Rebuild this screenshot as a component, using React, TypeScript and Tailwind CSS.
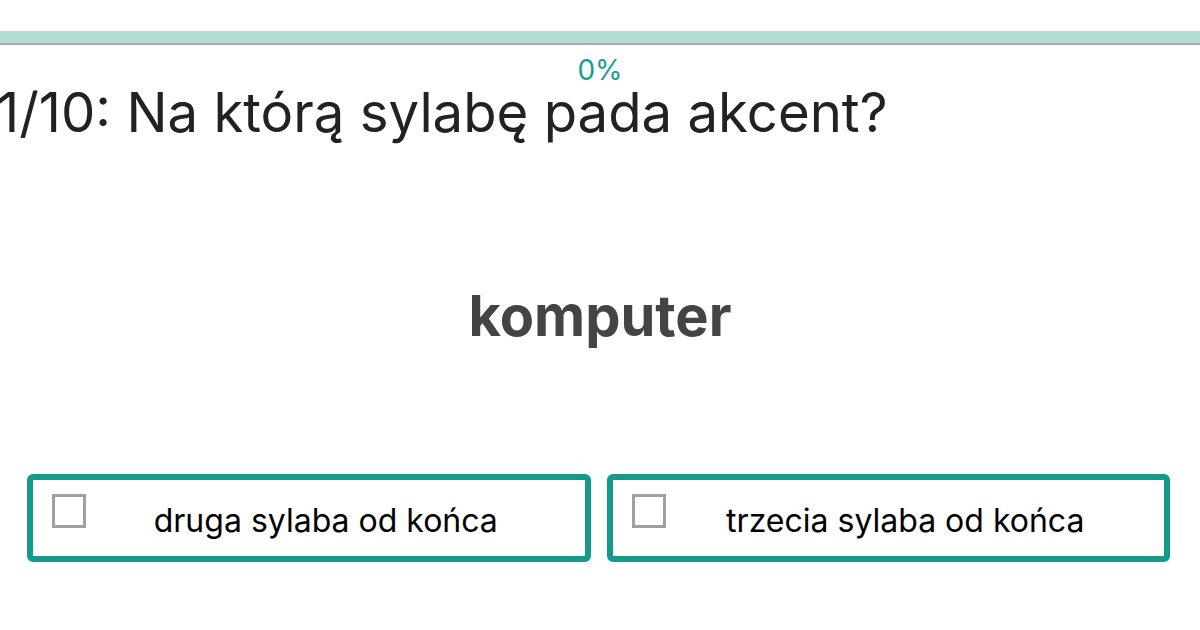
import React from 'react';

const OPTIONS = ['druga sylaba od końca', 'trzecia sylaba od końca'];

const App: React.FC = () => {
  return (
    <div className="w-[1200px] h-[630px] bg-white overflow-hidden font-['Inter','Liberation_Sans',sans-serif]">
      {/* Progress */}
      <div className="pt-[31px]">
        <div className="h-[14px] bg-[#b0ddd8] border-b-2 border-[#a9a9a9]"></div>
        <div className="text-center text-[28px] leading-none text-[#16a08f] mt-[11px]">0%</div>
      </div>

      {/* Question */}
      <h1 className="-ml-[3px] mt-[5px] text-[54.5px] leading-[46px] text-[#222]">1/10: Na którą sylabę pada akcent?</h1>

      <div className="mt-[153px] text-center text-[56px] font-bold leading-none text-[#444]">komputer</div>

      {/* Answers */}
      <div className="mt-[130px] ml-[27px] mr-[30px] grid grid-cols-2 gap-[16px]">
        {OPTIONS.map(opt => (
          <button key={opt} className="h-[88px] flex items-center border-[6px] border-[#139a8a] rounded-[6px] bg-white px-[19px]">
            <span className="w-[34px] h-[34px] border-[3px] border-[#a0a0a0] shrink-0 -mt-[14px]"></span>
            <span className="flex-1 text-center text-[32px] text-black pt-[6px]">{opt}</span>
          </button>
        ))}
      </div>
    </div>
  );
};

export default App;
